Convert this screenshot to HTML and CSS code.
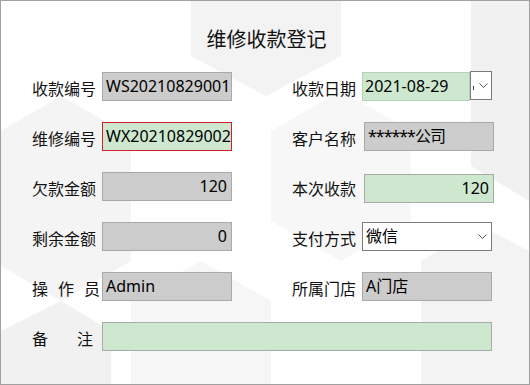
FILE: index.html
```html
<!DOCTYPE html>
<html lang="zh-CN">

<head>
    <meta charset="UTF-8">
    <title>维修收款登记</title>
    <link rel="stylesheet" href="styles.css">
</head>

<body>
    <div class="window">
        <!-- faint cube pattern behind the form -->
        <svg class="backdrop" width="528" height="383" viewBox="0 0 528 383">
            <polygon points="190,0 340,0 340,55 265,95 190,55" fill="#f3f3f3" />
            <polygon points="470,0 528,0 528,200 470,165" fill="#f1f1f1" />
            <polygon points="0,130 60,95 130,135 130,260 60,300 0,265" fill="#f4f4f4" />
            <polygon points="0,330 60,300 110,330 110,383 0,383" fill="#f1f1f1" />
            <polygon points="130,300 200,260 270,300 270,383 130,383" fill="#f6f6f6" />
            <polygon points="420,260 480,225 528,250 528,383 420,383" fill="#f3f3f3" />
            <polygon points="270,130 340,90 410,130 410,220 340,260 270,220" fill="#f7f7f7" />
        </svg>

        <h1 class="title">维修收款登记</h1>

        <div class="form">
            <div class="row">
                <div class="field">
                    <span class="label">收款编号</span>
                    <div class="box box-gray">WS20210829001</div>
                </div>
                <div class="field">
                    <span class="label">收款日期</span>
                    <div class="date">
                        <div class="date-text">2021-08-29</div>
                        <div class="date-btn">
                            <span class="date-tick"></span>
                            <svg class="chevron" width="9" height="5" viewBox="0 0 9 5">
                                <polyline points="0.5,0.5 4.5,4.5 8.5,0.5" fill="none" stroke="#555" stroke-width="1" />
                            </svg>
                        </div>
                    </div>
                </div>
            </div>

            <div class="row">
                <div class="field">
                    <span class="label">维修编号</span>
                    <div class="box box-green box-error">WX20210829002</div>
                </div>
                <div class="field">
                    <span class="label">客户名称</span>
                    <div class="box box-gray nudge stars">******公司</div>
                </div>
            </div>

            <div class="row">
                <div class="field">
                    <span class="label">欠款金额</span>
                    <div class="box box-gray num">120</div>
                </div>
                <div class="field">
                    <span class="label">本次收款</span>
                    <div class="box box-green num nudge nudge-down">120</div>
                </div>
            </div>

            <div class="row">
                <div class="field">
                    <span class="label">剩余金额</span>
                    <div class="box box-gray num">0</div>
                </div>
                <div class="field">
                    <span class="label">支付方式</span>
                    <div class="box select">
                        <span>微信</span>
                        <svg class="chevron" width="9" height="5" viewBox="0 0 9 5">
                            <polyline points="0.5,0.5 4.5,4.5 8.5,0.5" fill="none" stroke="#555" stroke-width="1" />
                        </svg>
                    </div>
                </div>
            </div>

            <div class="row">
                <div class="field">
                    <span class="label label-spaced">操作员</span>
                    <div class="box box-gray">Admin</div>
                </div>
                <div class="field">
                    <span class="label">所属门店</span>
                    <div class="box box-gray">A门店</div>
                </div>
            </div>

            <div class="row">
                <div class="field field-full">
                    <span class="label label-wide">备注</span>
                    <div class="box box-green box-wide"></div>
                </div>
            </div>
        </div>
    </div>
</body>

</html>
```

FILE: styles.css
```css
/* Window */
body {
    margin: 0;
    background-color: #fff;
}

.window {
    position: relative;
    box-sizing: border-box;
    width: 530px;
    height: 385px;
    border: 1px solid #a0a0a0;
    background-color: #fff;
    font-family: "Noto Sans CJK SC", sans-serif;
    color: #111;
    overflow: hidden;
}

.backdrop {
    position: absolute;
    top: 0;
    left: 0;
    z-index: 0;
}

.title {
    position: relative;
    margin: 24px 0 0 0;
    height: 28px;
    font-size: 20px;
    font-weight: normal;
    line-height: 28px;
    text-align: center;
    padding-left: 3px;
}

/* Form grid */
.form {
    position: relative;
    display: flex;
    flex-direction: column;
    gap: 21px;
    margin-top: 19px;
    padding-left: 31px;
}

.row {
    display: flex;
    gap: 60px;
    height: 29px;
}

.field {
    display: flex;
    align-items: center;
    width: 200px;
}

.field-full {
    width: 460px;
}

.label {
    flex-shrink: 0;
    width: 70px;
    padding-top: 3px;
    font-size: 16px;
    line-height: 22px;
    white-space: nowrap;
}

.label-spaced {
    letter-spacing: 10px;
}

.label-wide {
    letter-spacing: 29px;
}

/* Text boxes */
.box {
    box-sizing: border-box;
    flex-shrink: 0;
    width: 130px;
    height: 29px;
    padding: 0 3px;
    border: 1px solid #a9a9a9;
    font-family: "Noto Sans", "Noto Sans CJK SC", sans-serif;
    font-size: 16px;
    line-height: 27px;
    color: #000;
    white-space: nowrap;
    overflow: hidden;
}

.box-gray {
    background-color: #cccccc;
}

.box-green {
    background-color: #cde8cf;
}

.box-error {
    border-color: #d01f2a;
}

.box-wide {
    width: 390px;
}

.num {
    text-align: right;
    padding-right: 4px;
}

.nudge {
    margin-left: 2px;
}

.nudge-down {
    margin-top: 3px;
}

.stars {
    letter-spacing: -1px;
}

/* Combo box */
.select {
    display: flex;
    align-items: center;
    justify-content: space-between;
    padding: 0 4px 0 3px;
    border-color: #7a7a7a;
    background-color: #fff;
}

.chevron {
    display: block;
}

/* Date picker */
.date {
    display: flex;
    width: 130px;
    height: 29px;
    flex-shrink: 0;
}

.date-text {
    box-sizing: border-box;
    width: 108px;
    height: 29px;
    padding: 0 2px;
    border: 1px solid #b8cfba;
    background-color: #cde8cf;
    font-family: "Noto Sans", sans-serif;
    font-size: 16px;
    line-height: 27px;
    color: #000;
}

.date-btn {
    box-sizing: border-box;
    display: flex;
    align-items: center;
    gap: 5px;
    flex: 1;
    height: 29px;
    margin-top: -1px;
    padding-left: 2px;
    border: 1px solid #7a7a7a;
    background-color: #fff;
}

.date-tick {
    width: 1px;
    height: 4px;
    margin-top: 5px;
    background-color: #444;
}
```
